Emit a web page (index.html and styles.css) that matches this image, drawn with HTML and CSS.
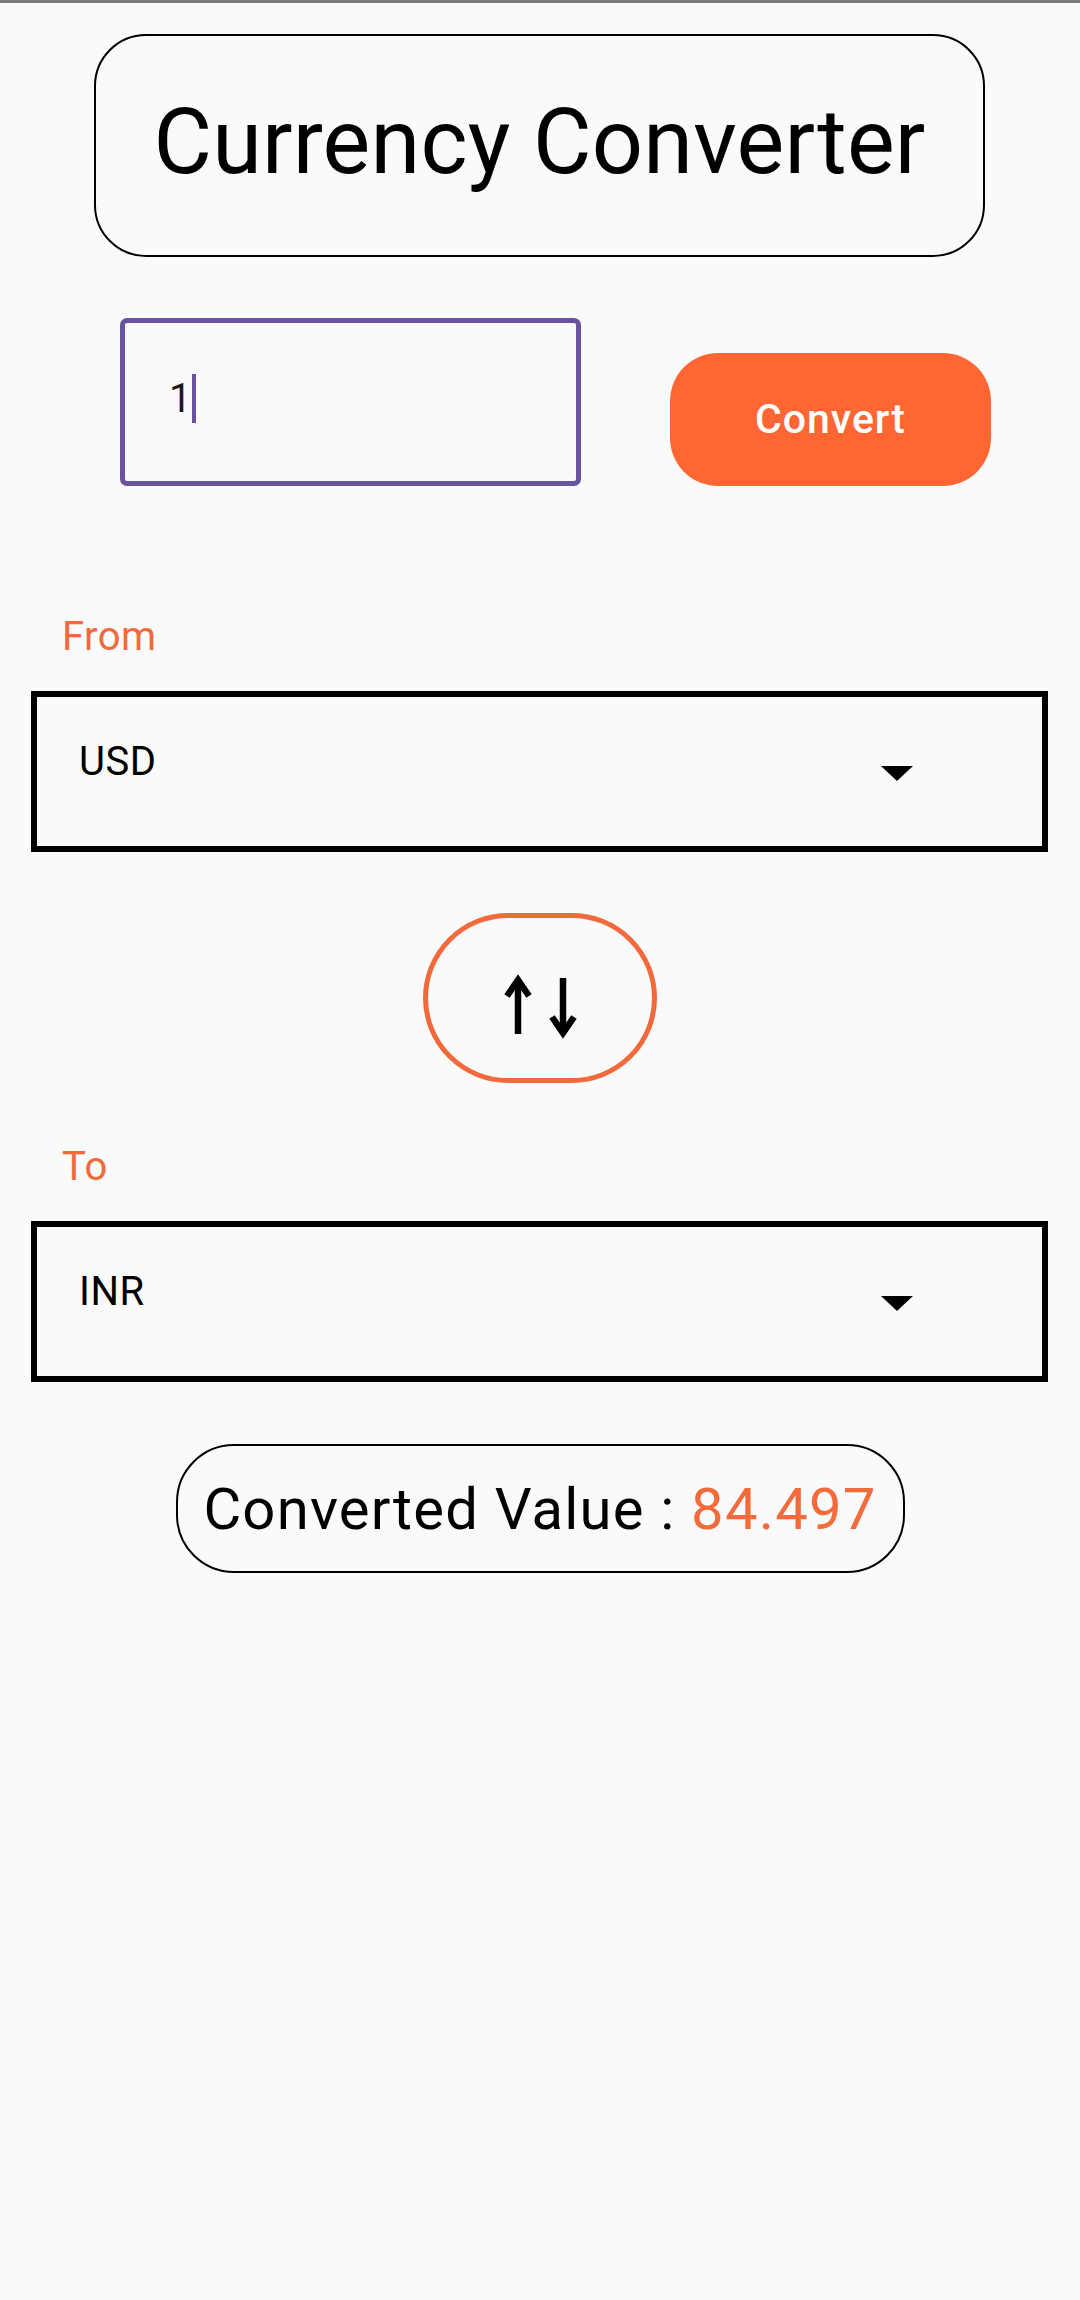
FILE: index.html
```html
<!DOCTYPE html>
<html>
<head>
<meta charset="utf-8">
<link rel="stylesheet" href="styles.css">
</head>
<body>
<div class="statusline"></div>
<div class="page">
  <div class="title">Currency Converter</div>
  <div class="input-row">
    <div class="amount"><span class="amount-text">1</span><span class="caret"></span></div>
    <div class="convert">Convert</div>
  </div>
  <div class="label from-label">From</div>
  <div class="select"><span class="select-text">USD</span><span class="tri"></span></div>
  <div class="swap-wrap">
    <div class="swap">
      <svg class="arrows" width="80" height="75" viewBox="0 0 80 75">
        <path d="M18 12 V65" stroke="#000" stroke-width="6.5" fill="none"/>
        <path d="M7 27 L18 11 L29 27" stroke="#000" stroke-width="6.5" fill="none" stroke-linejoin="miter"/>
        <path d="M63 9 V63" stroke="#000" stroke-width="6.5" fill="none"/>
        <path d="M52 48 L63 64 L74 48" stroke="#000" stroke-width="6.5" fill="none" stroke-linejoin="miter"/>
      </svg>
    </div>
  </div>
  <div class="label to-label">To</div>
  <div class="select"><span class="select-text">INR</span><span class="tri"></span></div>
  <div class="result-wrap">
    <div class="result">Converted Value : <span class="value">84.497</span></div>
  </div>
</div>
</body>
</html>
```
FILE: styles.css
```css
html, body {
  margin: 0;
  padding: 0;
  background: #fafafa;
  font-family: Roboto, "Liberation Sans", sans-serif;
  color: #000;
}
.statusline {
  height: 3px;
  background: #7d7d7d;
}
.page {
  display: flex;
  flex-direction: column;
  width: 1080px;
}
.title {
  box-sizing: border-box;
  margin: 31px 0 0 94px;
  width: 891px;
  height: 223px;
  border: 2.5px solid #000;
  border-radius: 52px;
  display: flex;
  align-items: center;
  justify-content: center;
  font-size: 90px;
  letter-spacing: 0.2px;
  padding-bottom: 6px;
}
.input-row {
  display: flex;
  align-items: flex-end;
  margin: 61px 0 0 120px;
  gap: 89px;
}
.amount {
  box-sizing: border-box;
  width: 461px;
  height: 168px;
  border: 5px solid #6853a0;
  border-radius: 7px;
  display: flex;
  align-items: center;
  padding-left: 44px;
  padding-bottom: 8px;
}
.amount-text {
  font-size: 40px;
  color: #1a1a1a;
}
.caret {
  width: 4px;
  height: 49px;
  background: #6853a0;
  margin-left: 1px;
}
.convert {
  width: 321px;
  height: 133px;
  border-radius: 48px;
  background: #ff6633;
  color: #fff;
  font-size: 41px;
  letter-spacing: 1px;
  font-weight: 500;
  display: flex;
  align-items: center;
  justify-content: center;
  padding-bottom: 2px;
  box-sizing: border-box;
}
.label {
  font-size: 40px;
  line-height: 47px;
  letter-spacing: 0.5px;
  color: #f06a3c;
  margin-left: 62px;
}
.from-label {
  margin-top: 127px;
}
.to-label {
  margin-top: 60px;
}
.select {
  box-sizing: border-box;
  margin: 31px 0 0 31px;
  width: 1017px;
  height: 161px;
  border: 6px solid #000;
  position: relative;
  padding: 41px 0 0 42px;
}
.select-text {
  font-size: 40px;
  line-height: 47px;
  letter-spacing: 0.5px;
  display: block;
}
.tri {
  position: absolute;
  left: 844px;
  top: 69px;
  width: 0;
  height: 0;
  border-left: 16px solid transparent;
  border-right: 16px solid transparent;
  border-top: 15px solid #000;
}
.swap-wrap {
  display: flex;
  justify-content: center;
  margin-top: 61px;
}
.swap {
  box-sizing: border-box;
  width: 234px;
  height: 170px;
  border: 5px solid #f26a3b;
  border-radius: 85px;
  display: flex;
  align-items: center;
  justify-content: center;
  padding-top: 16px;
}
.result-wrap {
  display: flex;
  justify-content: center;
  margin-top: 62px;
}
.result {
  box-sizing: border-box;
  width: 729px;
  height: 129px;
  border: 2.5px solid #000;
  border-radius: 58px;
  display: flex;
  align-items: center;
  justify-content: center;
  font-size: 58px;
  letter-spacing: 1.2px;
  white-space: pre;
}
.value {
  color: #f26b3a;
}
```
